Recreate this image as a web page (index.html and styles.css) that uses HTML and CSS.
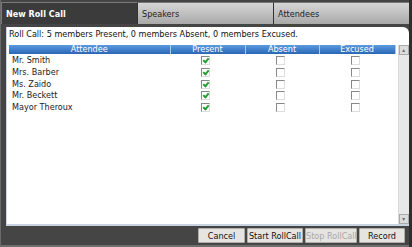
FILE: index.html
```html
<!DOCTYPE html>
<html lang="en">
<head>
    <meta charset="UTF-8">
    <meta name="viewport" content="width=device-width, initial-scale=1.0">
    <title>New Roll Call</title>
    <link rel="stylesheet" href="styles.css">
</head>
<body>
    <div class="frame">
        <div class="tabs">
            <div class="tab active">New Roll Call</div>
            <div class="tab">Speakers</div>
            <div class="tab">Attendees</div>
        </div>

        <div class="panel">
            <div class="summary">Roll Call: 5 members Present, 0 members Absent, 0 members Excused.</div>
            <div class="grid-wrap">
                <table class="grid">
                    <colgroup>
                        <col class="col-name">
                        <col class="col-present">
                        <col class="col-absent">
                        <col class="col-excused">
                    </colgroup>
                    <thead>
                        <tr>
                            <th>Attendee</th>
                            <th>Present</th>
                            <th>Absent</th>
                            <th>Excused</th>
                        </tr>
                    </thead>
                    <tbody>
                        <tr><td>Mr. Smith</td><td><span class="box checked"></span></td><td><span class="box"></span></td><td><span class="box"></span></td></tr>
                        <tr><td>Mrs. Barber</td><td><span class="box checked"></span></td><td><span class="box"></span></td><td><span class="box"></span></td></tr>
                        <tr><td>Ms. Zaido</td><td><span class="box checked"></span></td><td><span class="box"></span></td><td><span class="box"></span></td></tr>
                        <tr><td>Mr. Beckett</td><td><span class="box checked"></span></td><td><span class="box"></span></td><td><span class="box"></span></td></tr>
                        <tr><td>Mayor Theroux</td><td><span class="box checked"></span></td><td><span class="box"></span></td><td><span class="box"></span></td></tr>
                    </tbody>
                </table>
                <div class="scrollbar">
                    <div class="arrow">&#9652;</div>
                    <div class="arrow">&#9662;</div>
                </div>
            </div>
        </div>

        <div class="buttons">
            <button class="btn-cancel">Cancel</button>
            <button class="btn-start">Start RollCall</button>
            <button class="btn-stop" disabled>Stop RollCall</button>
            <button class="btn-record">Record</button>
        </div>
    </div>
</body>
</html>
```

FILE: styles.css
```css
body {
    margin: 0;
    background-color: #2e2e2e;
    font-family: "DejaVu Sans", Verdana, sans-serif;
    font-stretch: condensed;
    font-size: 9px;
}

.frame {
    width: 408px;
    height: 245px;
    background-color: #454545;
    border-left: 1px solid #6a6a6a;
    border-bottom: 2px solid #6e6e6e;
    display: flex;
    flex-direction: column;
}

.tabs {
    display: flex;
    height: 22px;
    margin-top: 2px;
}

.tab {
    flex: 1;
    padding: 6px 4px 0;
    color: #222;
    background: linear-gradient(#d6d6d6, #a9a9a9);
    border-left: 1px solid #333;
    border-top: 1px solid #777;
}

.tab.active {
    background-color: #3b3b3b;
    background-image: none;
    color: white;
    font-weight: bold;
    border-left: 1px solid #7a7a7a;
    border-top: 1px solid #7a7a7a;
}

.panel {
    margin: 3px 0 0 5px;
    height: 197px;
    background-color: white;
    border-top-right-radius: 6px;
    border-bottom: 2px solid #c9d4e2;
    border-left: 1px solid #c9d4e2;
    display: flex;
    flex-direction: column;
}

.summary {
    padding: 2px 0 0 2px;
    height: 15px;
    line-height: 11px;
    color: #111;
}

.grid-wrap {
    display: flex;
    margin: 1px 0 0 2px;
    flex: 1;
}

.grid {
    width: 386px;
    table-layout: fixed;
    border-collapse: collapse;
    align-self: flex-start;
}

.col-name { width: 161px; }
.col-present { width: 75px; }
.col-absent { width: 74px; }
.col-excused { width: 76px; }

.grid th {
    height: 9px;
    padding: 0;
    font-weight: normal;
    color: white;
    line-height: 9px;
    background: linear-gradient(#5b9be0, #2a66b4);
    border-right: 1px solid #a8c8ec;
}

.grid td {
    height: 11.7px;
    padding: 0 0 0 3px;
    color: #222;
    line-height: 11px;
}

.grid tbody tr:first-child td {
    padding-top: 1px;
}

.grid td + td {
    text-align: center;
    padding: 0 4px 0 0;
}

.box {
    display: inline-block;
    width: 7px;
    height: 7px;
    border: 1px solid #888;
    border-right-color: #ddd;
    border-bottom-color: #ddd;
    background: white;
    vertical-align: middle;
    position: relative;
}

.box.checked::after {
    content: "";
    position: absolute;
    left: 2px;
    top: 0;
    width: 2px;
    height: 4px;
    border: solid #22a030;
    border-width: 0 2px 2px 0;
    transform: rotate(40deg);
}

.scrollbar {
    width: 10px;
    margin-left: 2px;
    background-color: #e8e8e8;
    border-left: 1px solid #d8d8d8;
    display: flex;
    flex-direction: column;
    justify-content: space-between;
}

.arrow {
    height: 8px;
    font-size: 6px;
    line-height: 8px;
    text-align: center;
    color: #666;
    background: #dcdcdc;
    border: 1px solid #aaa;
}

.buttons {
    display: flex;
    justify-content: flex-end;
    gap: 2px;
    margin: 2px 4px 0 0;
}

.buttons button {
    height: 15px;
    padding: 0;
    white-space: nowrap;
    font-family: "DejaVu Sans", Verdana, sans-serif;
    font-stretch: condensed;
    font-size: 9px;
    color: #111;
    background-color: #e6e4e0;
    border: 1px solid #b0aea8;
    border-radius: 1px;
}

.btn-cancel { width: 47px; }
.btn-start { width: 56px; }
.btn-stop { width: 52px; }
.btn-record { width: 46px; }

.buttons button:disabled {
    color: #a8a8a8;
}
```
